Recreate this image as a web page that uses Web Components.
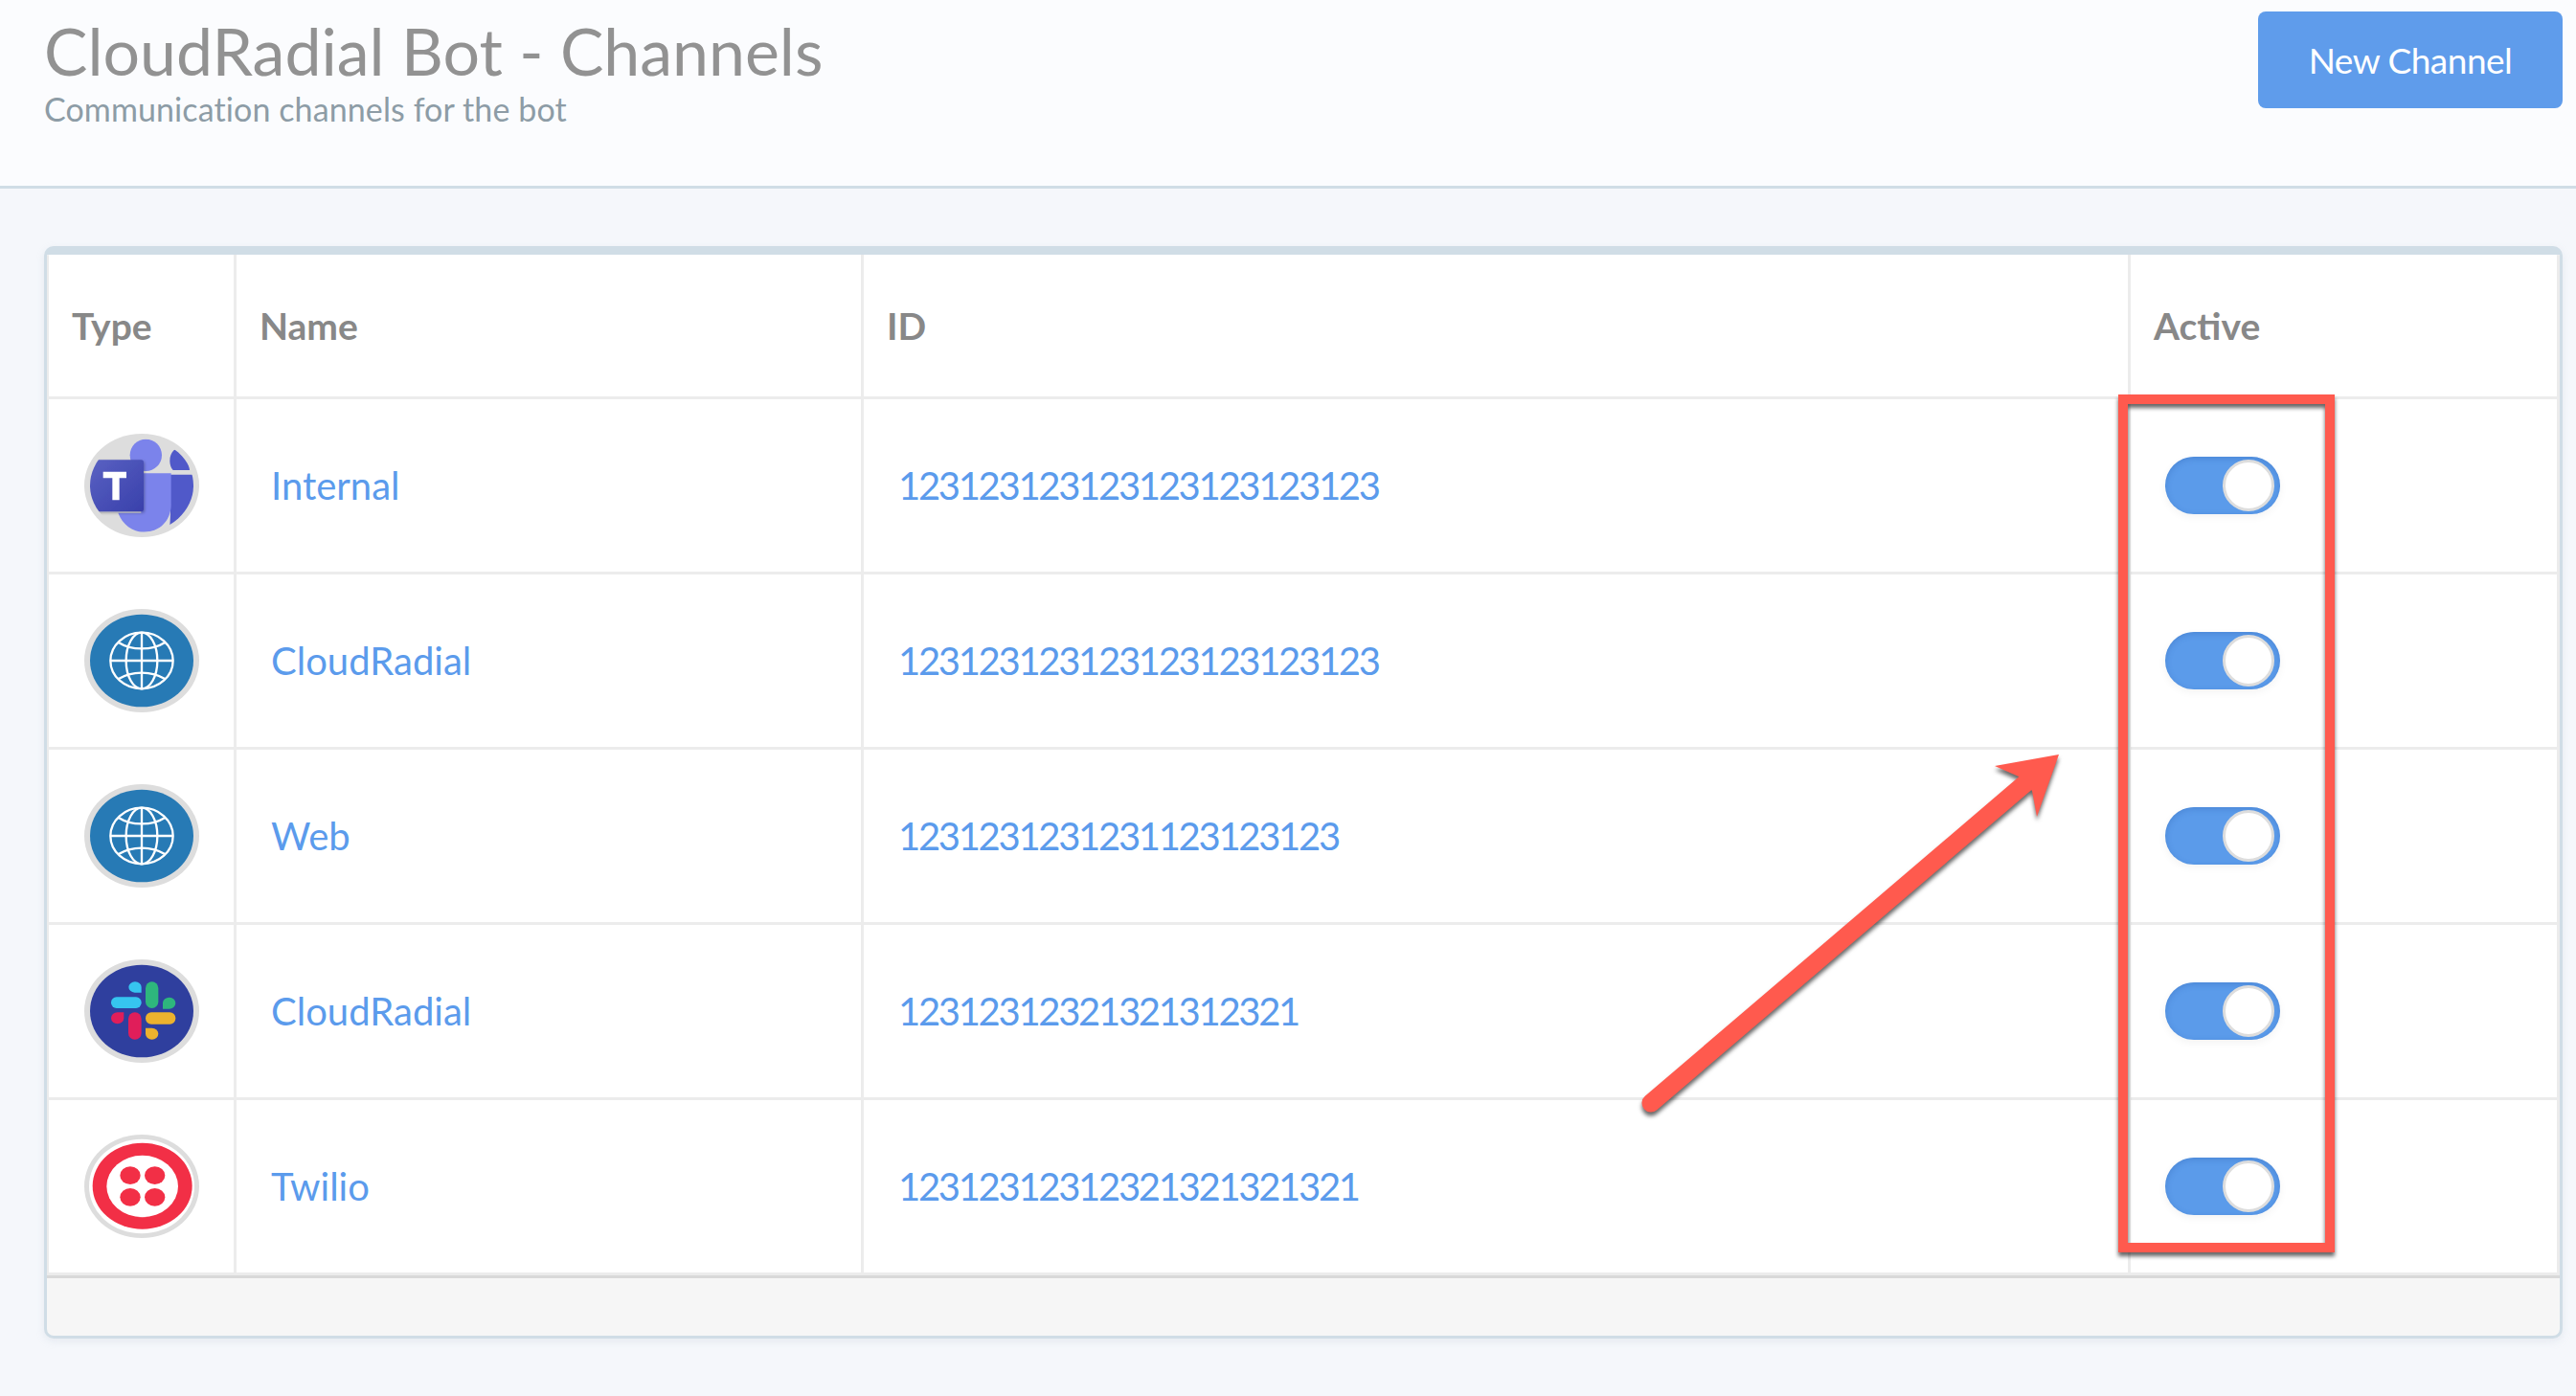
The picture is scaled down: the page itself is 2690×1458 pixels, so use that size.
<!DOCTYPE html>
<html lang="en">
<head>
<meta charset="utf-8">
<title>CloudRadial Bot - Channels</title>
<style>
  html, body { margin: 0; padding: 0; background: #f5f7fb; }
  body { position: relative; width: 2690px; height: 1458px; overflow: hidden; font-family: Lato, sans-serif; }
</style>
</head>
<body>
<page-header>
  <span slot="title">CloudRadial Bot - Channels</span>
  <span slot="subtitle">Communication channels for the bot</span>
  <new-button slot="action">New Channel</new-button>
</page-header>

<channel-card>
  <channel-row header>
    <span slot="type">Type</span>
    <span slot="name">Name</span>
    <span slot="id">ID</span>
    <span slot="active">Active</span>
  </channel-row>
  <channel-row>
    <channel-icon slot="type" kind="teams"></channel-icon>
    <span slot="name">Internal</span>
    <span slot="id">123123123123123123123123</span>
    <toggle-switch slot="active"></toggle-switch>
  </channel-row>
  <channel-row>
    <channel-icon slot="type" kind="globe"></channel-icon>
    <span slot="name">CloudRadial</span>
    <span slot="id">123123123123123123123123</span>
    <toggle-switch slot="active"></toggle-switch>
  </channel-row>
  <channel-row>
    <channel-icon slot="type" kind="globe"></channel-icon>
    <span slot="name">Web</span>
    <span slot="id">1231231231231123123123</span>
    <toggle-switch slot="active"></toggle-switch>
  </channel-row>
  <channel-row>
    <channel-icon slot="type" kind="slack"></channel-icon>
    <span slot="name">CloudRadial</span>
    <span slot="id">12312312321321312321</span>
    <toggle-switch slot="active"></toggle-switch>
  </channel-row>
  <channel-row>
    <channel-icon slot="type" kind="twilio"></channel-icon>
    <span slot="name">Twilio</span>
    <span slot="id">12312312312321321321321</span>
    <toggle-switch slot="active"></toggle-switch>
  </channel-row>
</channel-card>

<mark-up></mark-up>

<script>
class PageHeader extends HTMLElement {
  constructor() {
    super();
    const root = this.attachShadow({ mode: "open" });
    root.innerHTML = `
      <style>
        :host {
          display: flex;
          justify-content: space-between;
          align-items: flex-start;
          box-sizing: border-box;
          height: 197px;
          padding: 12px 14px 0 46px;
          background: #fbfcfe;
          border-bottom: 3px solid #d0dde6;
        }
        .text { padding-top: 3px; }
        .title { font-size: 68px; line-height: 76px; color: #929292; white-space: nowrap; }
        .subtitle { font-size: 34px; line-height: 40px; margin-top: 3px; color: #8d9ca6; letter-spacing: .1px; white-space: nowrap; }
      </style>
      <div class="text">
        <div class="title"><slot name="title"></slot></div>
        <div class="subtitle"><slot name="subtitle"></slot></div>
      </div>
      <slot name="action"></slot>
    `;
  }
}

class NewButton extends HTMLElement {
  constructor() {
    super();
    const root = this.attachShadow({ mode: "open" });
    root.innerHTML = `
      <style>
        :host {
          display: flex;
          align-items: center;
          justify-content: center;
          box-sizing: border-box;
          width: 318px;
          height: 101px;
          background: #5f9ceb;
          border-radius: 8px;
          color: #fff;
          font-size: 37px;
          letter-spacing: -.5px;
          white-space: nowrap;
        }
      </style>
      <slot></slot>
    `;
  }
}

class ChannelCard extends HTMLElement {
  constructor() {
    super();
    const root = this.attachShadow({ mode: "open" });
    root.innerHTML = `
      <style>
        :host {
          display: block;
          box-sizing: border-box;
          width: 2630px;
          margin: 60px 0 0 46px;
          background: #f6f6f6;
          border: 3px solid #d0dde6;
          border-top-width: 9px;
          border-radius: 10px;
          box-shadow: 0 3px 8px rgba(160, 180, 195, .18);
          overflow: hidden;
        }
        .table {
          background: #fff;
          border-left: 2px solid #ececec;
          border-right: 3px solid #ececec;
        }
        .footer {
          height: 60px;
          border-top: 3px solid #d9d9d9;
        }
      </style>
      <div class="table"><slot></slot></div>
      <div class="footer"></div>
    `;
  }
}

class ChannelRow extends HTMLElement {
  constructor() {
    super();
    const root = this.attachShadow({ mode: "open" });
    root.innerHTML = `
      <style>
        :host {
          display: grid;
          grid-template-columns: 196px 655px 1323px 1fr;
          height: 183px;
          border-bottom: 3px solid #ececec;
          box-sizing: border-box;
          color: #5b9bec;
          font-size: 40px;
        }
        :host([header]) {
          height: 151px;
          color: #888;
          font-size: 39px;
          font-weight: 700;
        }
        .cell {
          display: flex;
          align-items: center;
          box-sizing: border-box;
          border-right: 3px solid #ececec;
          padding-left: 36px;
          white-space: nowrap;
        }
        .cell.type { padding-left: 37px; }
        .cell:last-child { border-right: 0; }
        :host([header]) .cell { padding-left: 24px; }
        /* the numbers sit tighter than the font's own digit width */
        :host(:not([header])) ::slotted([slot="id"]) { letter-spacing: -2.3px; }
      </style>
      <div class="cell type"><slot name="type"></slot></div>
      <div class="cell"><slot name="name"></slot></div>
      <div class="cell"><slot name="id"></slot></div>
      <div class="cell"><slot name="active"></slot></div>
    `;
  }
}

const ICONS = {
  teams: `
    <svg viewBox="84 68 360 324" width="120" height="108">
      <defs>
        <clipPath id="c"><ellipse cx="264" cy="230" rx="162" ry="146"/></clipPath>
        <linearGradient id="g" x1="0" y1="0" x2="1" y2="1">
          <stop offset="0" stop-color="#5a62c3"/><stop offset="1" stop-color="#3940ab"/>
        </linearGradient>
        <filter id="s" x="-10%" y="-10%" width="125%" height="125%"><feDropShadow dx="3" dy="4" stdDeviation="4" flood-color="#000" flood-opacity=".3"/></filter>
      </defs>
      <ellipse cx="264" cy="230" rx="180" ry="162" fill="#ddd"/>
      <g clip-path="url(#c)">
        <path d="M352 196H430V376H350C354 340 356 300 352 196Z" fill="#5059c9"/>
        <path d="M366 118C392 122 412 150 414 182H362C350 170 346 136 366 118Z" fill="#5059c9"/>
        <circle cx="277" cy="135" r="50" fill="#7b83eb"/>
        <path d="M262 192H356V290C356 340 320 376 272 376C234 376 204 352 190 316H262Z" fill="#7b83eb"/>
        <g filter="url(#s)">
          <rect x="96" y="150" width="174" height="162" rx="8" fill="url(#g)"/>
        </g>
        <path d="M143 187H216V207H194V276H172V207H143Z" fill="#fff"/>
      </g>
    </svg>`,
  globe: `
    <svg viewBox="84 63 360 324" width="120" height="108">
      <ellipse cx="264" cy="225" rx="180" ry="162" fill="#ddd"/>
      <ellipse cx="264" cy="225" rx="162" ry="145" fill="#277ab5"/>
      <g fill="none" stroke="#fff" stroke-width="7">
        <ellipse cx="264" cy="225" rx="98" ry="88"/>
        <ellipse cx="264" cy="225" rx="49" ry="88"/>
        <path d="M264 137V313M166 225H362"/>
        <path d="M190 167C232 194 296 194 338 167M190 283C232 256 296 256 338 283"/>
      </g>
    </svg>`,
  slack: `
    <svg viewBox="84 65 360 324" width="120" height="108">
      <ellipse cx="264" cy="227" rx="180" ry="162" fill="#ddd"/>
      <ellipse cx="264" cy="227" rx="162" ry="145" fill="#2f3f9e"/>
      <g fill="#36c5f0">
        <path d="M263 169H242A20 17 0 1 1 263 152Z"/>
        <rect x="168" y="183" width="95" height="35" rx="17"/>
      </g>
      <g fill="#2eb67d">
        <rect x="276" y="135" width="40" height="83" rx="20"/>
        <path d="M330 220V201A20 18 0 1 1 350 220Z"/>
      </g>
      <g fill="#e01e5a">
        <path d="M208 231V249A20 18 0 1 1 188 231Z"/>
        <rect x="222" y="231" width="41" height="85" rx="20"/>
      </g>
      <g fill="#ecb22e">
        <rect x="276" y="231" width="94" height="37" rx="18"/>
        <path d="M276 280H296A20 18 0 1 1 276 298Z"/>
      </g>
    </svg>`,
  twilio: `
    <svg viewBox="84 59 360 324" width="120" height="108">
      <ellipse cx="264" cy="221" rx="180" ry="162" fill="#ddd"/>
      <ellipse cx="264" cy="221" rx="165" ry="148" fill="#fff"/>
      <ellipse cx="266" cy="220" rx="156" ry="135" fill="#f22f46"/>
      <ellipse cx="266" cy="221" rx="112" ry="97" fill="#fff"/>
      <g fill="#f22f46">
        <ellipse cx="228" cy="187" rx="32" ry="28"/>
        <ellipse cx="305" cy="187" rx="32" ry="28"/>
        <ellipse cx="228" cy="255" rx="32" ry="28"/>
        <ellipse cx="305" cy="255" rx="32" ry="28"/>
      </g>
    </svg>`,
};

class ChannelIcon extends HTMLElement {
  constructor() {
    super();
    const root = this.attachShadow({ mode: "open" });
    root.innerHTML = `
      <style>
        :host { display: block; width: 120px; height: 108px; }
        svg { display: block; }
      </style>
      ${ICONS[this.getAttribute("kind")]}
    `;
  }
}

class ToggleSwitch extends HTMLElement {
  constructor() {
    super();
    const root = this.attachShadow({ mode: "open" });
    root.innerHTML = `
      <style>
        :host {
          display: flex;
          align-items: center;
          justify-content: flex-end;
          box-sizing: border-box;
          width: 120px;
          height: 60px;
          padding-right: 6px;
          background: #5b9bea;
          border-radius: 30px;
          box-shadow: inset 0 2px 6px rgba(40, 90, 170, .3), 0 3px 8px rgba(0, 0, 0, .05);
        }
        .knob {
          box-sizing: border-box;
          width: 54px;
          height: 54px;
          background: #fff;
          border: 3px solid #ddd;
          border-radius: 50%;
        }
      </style>
      <div class="knob"></div>
    `;
  }
}

class MarkUp extends HTMLElement {
  constructor() {
    super();
    const root = this.attachShadow({ mode: "open" });
    root.innerHTML = `
      <style>
        :host { position: absolute; left: 0; top: 0; width: 2690px; height: 1458px; pointer-events: none; }
        svg { display: block; filter: drop-shadow(0 4px 2px rgba(0, 0, 0, .6)); }
      </style>
      <svg width="2690" height="1458" viewBox="0 0 2690 1458">
        <path d="M2212 412H2438V1308H2212ZM2222 422V1298H2428V422Z" fill-rule="evenodd" fill="#ff5a4e"/>
        <path d="M1724 1152L2115 818" stroke="#ff5a4e" stroke-width="19" stroke-linecap="round" fill="none"/>
        <path d="M2150 788L2083 800L2108 811L2122 826L2127 853Z" fill="#ff5a4e"/>
      </svg>
    `;
  }
}

customElements.define("page-header", PageHeader);
customElements.define("new-button", NewButton);
customElements.define("channel-card", ChannelCard);
customElements.define("channel-row", ChannelRow);
customElements.define("channel-icon", ChannelIcon);
customElements.define("toggle-switch", ToggleSwitch);
customElements.define("mark-up", MarkUp);
</script>
</body>
</html>
